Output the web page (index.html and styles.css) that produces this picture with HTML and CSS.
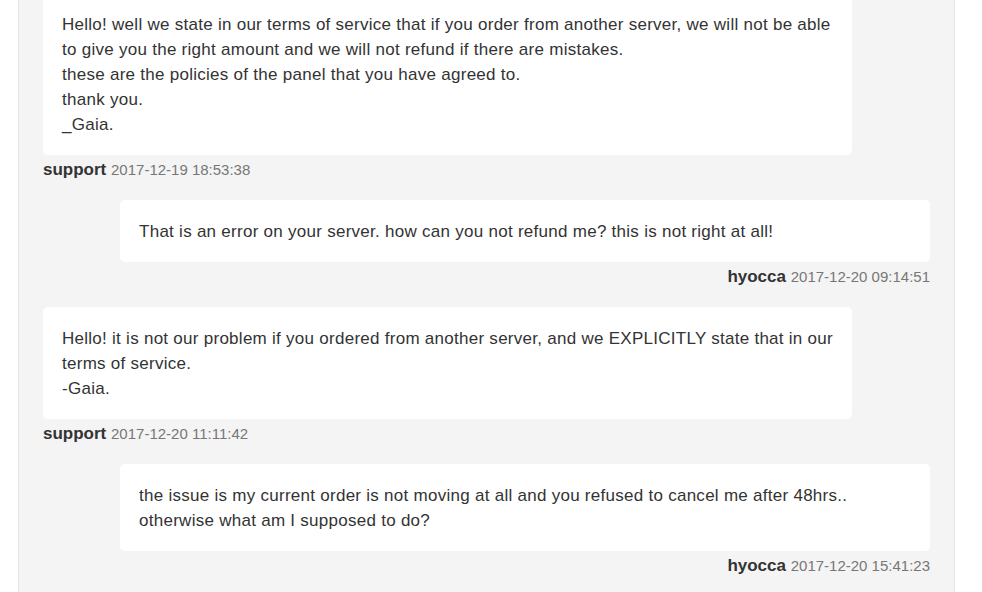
FILE: index.html
```html
<!DOCTYPE html>
<html>
<head>
<meta charset="utf-8">
<link rel="stylesheet" href="styles.css">
</head>
<body>
<div class="panel">
  <div class="thread">
    <div class="item support">
      <div class="bubble">Hello! well we state in our terms of service that if you order from another server, we will not be able to give you the right amount and we will not refund if there are mistakes.<br>these are the policies of the panel that you have agreed to.<br>thank you.<br>_Gaia.</div>
      <div class="meta"><b>support</b> <span class="date">2017-12-19 18:53:38</span></div>
    </div>
    <div class="item user">
      <div class="bubble">That is an error on your server. how can you not refund me? this is not right at all!</div>
      <div class="meta"><b>hyocca</b> <span class="date">2017-12-20 09:14:51</span></div>
    </div>
    <div class="item support">
      <div class="bubble">Hello! it is not our problem if you ordered from another server, and we EXPLICITLY state that in our terms of service.<br>-Gaia.</div>
      <div class="meta"><b>support</b> <span class="date">2017-12-20 11:11:42</span></div>
    </div>
    <div class="item user">
      <div class="bubble">the issue is my current order is not moving at all and you refused to cancel me after 48hrs..<br>otherwise what am I supposed to do?</div>
      <div class="meta"><b>hyocca</b> <span class="date">2017-12-20 15:41:23</span></div>
    </div>
  </div>
</div>
</body>
</html>
```
FILE: styles.css
```css
html, body {
  margin: 0;
  padding: 0;
  background: #ffffff;
}
body {
  font-family: "Liberation Sans", Arial, sans-serif;
  color: #333333;
}
.panel {
  margin-left: 18px;
  width: 935px;
  height: 600px;
  background: #f4f4f4;
  border-left: 1px solid #e4e4e4;
  border-right: 1px solid #e4e4e4;
  overflow: hidden;
}
.thread {
  margin-top: -7px;
  padding: 0 24px;
  display: flex;
  flex-direction: column;
}
.item {
  margin-bottom: 20px;
}
.item.support {
  margin-right: 78px;
}
.item.user {
  margin-left: 77px;
}
.bubble {
  background: #ffffff;
  border-radius: 5px;
  padding: 19px 19px 18px;
  font-size: 17px;
  line-height: 25px;
  letter-spacing: 0.27px;
}
.meta {
  margin-top: 5px;
  font-size: 17px;
  line-height: 20px;
}
.meta b {
  color: #333333;
}
.item.user .meta {
  text-align: right;
}
.date {
  font-size: 15px;
  color: #777777;
}
```
